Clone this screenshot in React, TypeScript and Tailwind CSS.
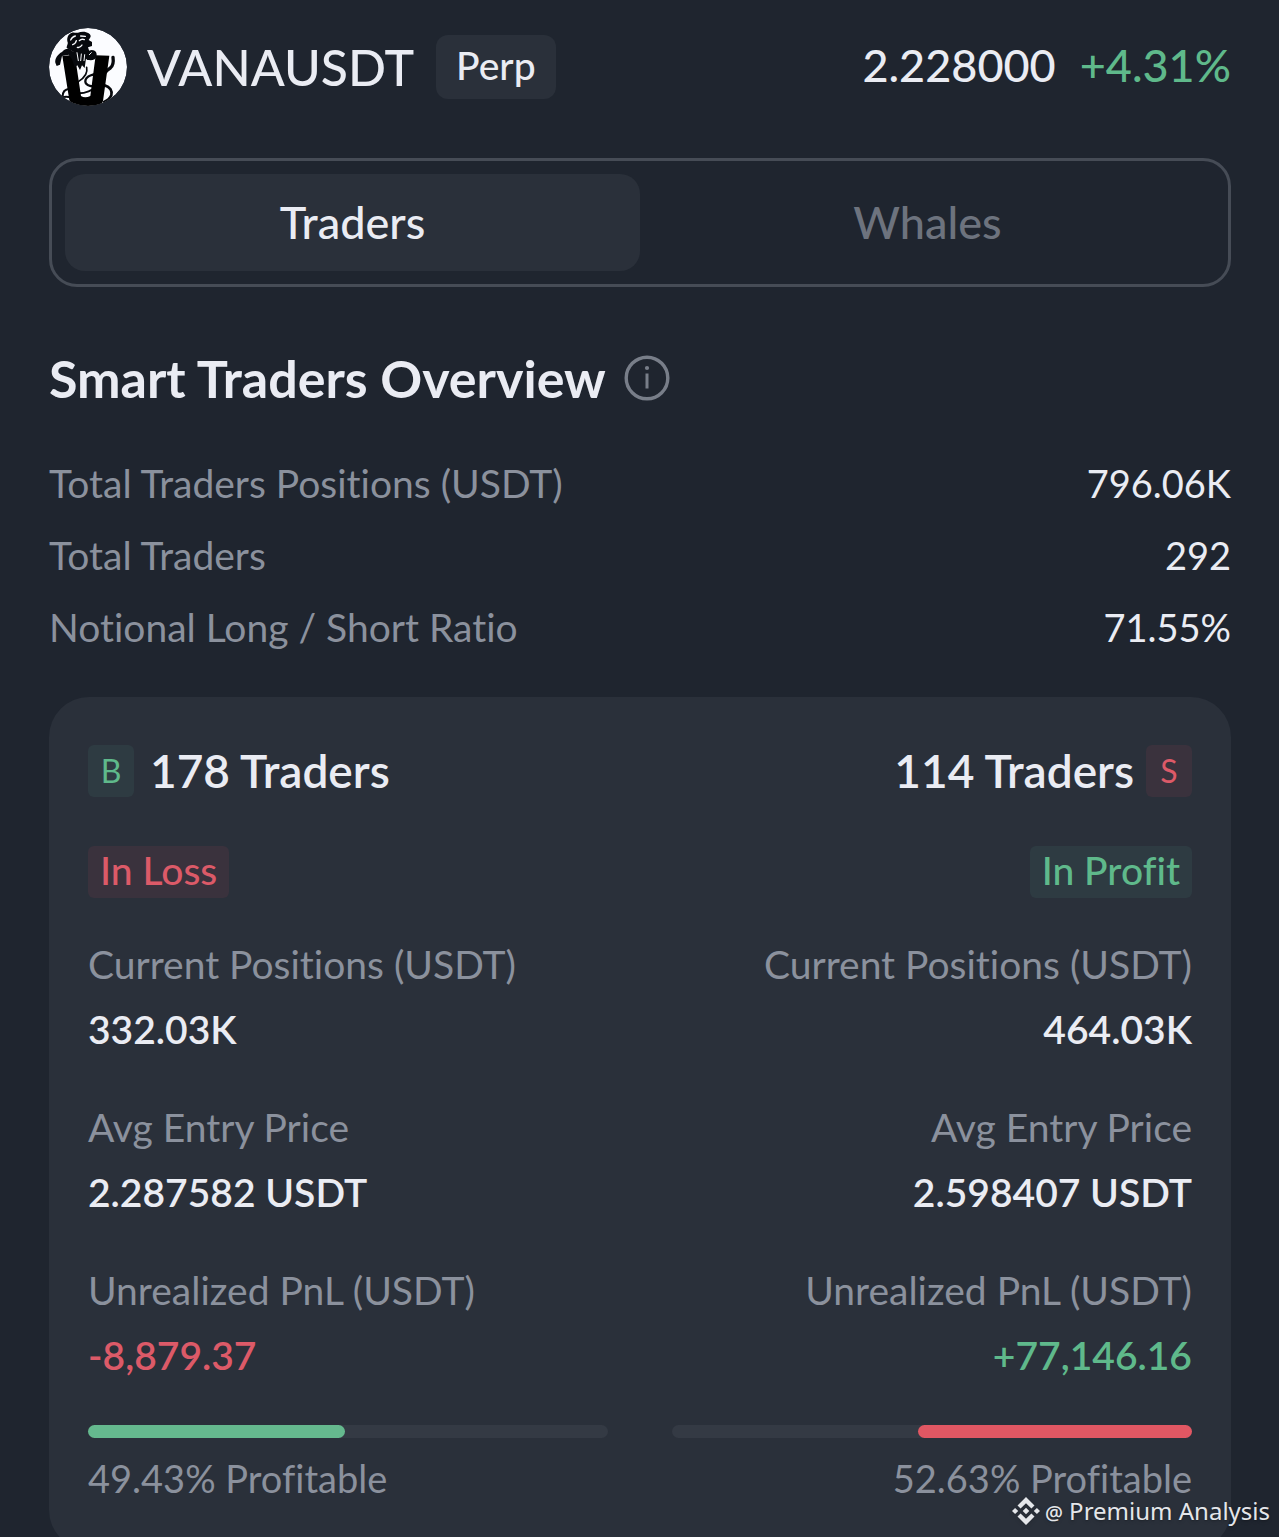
type Tone = 'green' | 'red';

type Side = {
  letter: string;
  tone: Tone;
  traders: string;
  status: string;
  statusTone: Tone;
  positions: string;
  entry: string;
  pnl: string;
  pnlTone: Tone;
  profitable: number;
};

const tag: Record<Tone, string> = {
  green: 'bg-[#2e3b42] text-[#5fb98b]',
  red: 'bg-[#3a323d] text-[#dc5a68]',
};
const ink: Record<Tone, string> = { green: 'text-[#5fb98b]', red: 'text-[#dc5a68]' };
const fill: Record<Tone, string> = { green: 'bg-[#65b98e]', red: 'bg-[#e15763]' };

const overview = [
  ['Total Traders Positions (USDT)', '796.06K'],
  ['Total Traders', '292'],
  ['Notional Long / Short Ratio', '71.55%'],
];

const longs: Side = {
  letter: 'B',
  tone: 'green',
  traders: '178 Traders',
  status: 'In Loss',
  statusTone: 'red',
  positions: '332.03K',
  entry: '2.287582 USDT',
  pnl: '-8,879.37',
  pnlTone: 'red',
  profitable: 49.43,
};

const shorts: Side = {
  letter: 'S',
  tone: 'red',
  traders: '114 Traders',
  status: 'In Profit',
  statusTone: 'green',
  positions: '464.03K',
  entry: '2.598407 USDT',
  pnl: '+77,146.16',
  pnlTone: 'green',
  profitable: 52.63,
};

function CoinLogo() {
  return (
    <svg viewBox="27 24 234 234" className="size-[78px] shrink-0" role="img" aria-label="VANA">
      <clipPath id="coin">
        <circle cx="144" cy="141" r="117" />
      </clipPath>
      <g clipPath="url(#coin)">
        <circle cx="144" cy="141" r="117" fill="#fbfcff" />
        <g fill="none" stroke="#07090d" strokeLinecap="round" strokeLinejoin="round">
          <path d="M140 142c4 18-8 32-24 42" strokeWidth="5" />
          <path d="M188 164c-24-6-52 4-52 20 0 14 20 18 52 14" strokeWidth="7" />
          <path d="M194 196c16 4 24 18 20 30-4 10-12 16-22 20" strokeWidth="8" />
          <path d="M118 220c16 0 40-8 54-22" strokeWidth="6" />
          <path d="M88 206c-14 2-20 12-20 22M92 232c-10-2-18-2-24 0" strokeWidth="6" />
          <path d="M219 112c2 14 0 26-8 32-6 4-10 6-14 12" strokeWidth="10" />
        </g>
        <path d="M67 108l22-2 16 3 18 119q12 8 28 0l16-122 41 1-19 136q-3 12-14 18H100q-10-8-12-20z" fill="#000" />
        <path
          d="M46 128c-2-12 8-26 20-32 8-8 16-12 24-8l8 6 14-2 10-4 12 4 14 0c6-4 16-2 20 4 4 8 2 18-4 22-8 4-16 2-22 2l-4-4-4 28-8-8-6 14-8-14-8 6-8-24-10-14-20 4-6 26-10 4z"
          fill="#07090d"
        />
        <path
          d="M80 84c0-8 6-12 2-20-2-14 4-22 14-26 6-2 12 2 18 0 10-4 24-4 32 2 6 4 8 10 4 14l-4 6 10 6 0 12-12 4 4 12-10 6-26-2-14-4z"
          fill="#07090d"
        />
        <g fill="none" stroke="#fbfcff" strokeLinecap="round">
          <path d="M92 60c3-7 8-11 14-12M98 74c6-2 10-7 11-12M122 48l14 1M118 62c4-4 10-5 15-3M112 82c7 2 11-2 14-7" strokeWidth="4" />
          <path d="M111 98l4 24M124 102l-2 20M134 104l-2 18M148 104l6-6" strokeWidth="3" />
        </g>
      </g>
    </svg>
  );
}

function InfoIcon() {
  return (
    <svg viewBox="0 0 46 46" className="size-[46px]" fill="none" stroke="#787e89" aria-hidden="true">
      <circle cx="23" cy="23" r="20.8" strokeWidth="3.4" />
      <path d="M23 18.500v15" strokeWidth="3" />
      <circle cx="23" cy="13" r="2.100" fill="#787e89" stroke="none" />
    </svg>
  );
}

function BinanceMark() {
  return (
    <svg viewBox="0 0 28 28" className="size-7 drop-shadow-sm" fill="#e4e6ea" aria-hidden="true">
      <path d="M14 0l8.500 8.500-3.100 3.100L14 6.200l-5.400 5.400-3.100-3.100zM14 28l-8.500-8.500 3.100-3.100 5.400 5.400 5.400-5.400 3.100 3.100zM0 14l3.100-3.100L6.200 14l-3.100 3.100zM21.800 14l3.100-3.100L28 14l-3.100 3.100zM14 10.700l3.300 3.300-3.300 3.300-3.300-3.300z" />
    </svg>
  );
}

function Stat({ label, value, tone }: { label: string; value: string; tone?: Tone }) {
  return (
    <div>
      <dt className="text-[#8b919d]">{label}</dt>
      <dd className={`font-semibold ${tone ? ink[tone] : 'text-[#eaecf3]'}`}>{value}</dd>
    </div>
  );
}

function SidePanel({ side, right = false }: { side: Side; right?: boolean }) {
  return (
    <section className={`flex flex-col ${right ? 'items-end text-right' : 'items-start'}`}>
      <div className={`flex items-center ${right ? 'flex-row-reverse gap-3' : 'gap-4'}`}>
        <span className={`flex h-[52px] w-[46px] items-center justify-center rounded-md text-[32px] leading-none ${tag[side.tone]}`}>
          {side.letter}
        </span>
        <h2 className="text-[46px] leading-[52px] font-semibold">{side.traders}</h2>
      </div>
      <span className={`mt-[49px] rounded-md px-3 pb-1 text-[39px] leading-[48px] font-medium ${tag[side.statusTone]}`}>
        {side.status}
      </span>
      <dl className="mt-[34px] flex flex-col gap-[33px] text-[39px] leading-[65px]">
        <Stat label="Current Positions (USDT)" value={side.positions} />
        <Stat label="Avg Entry Price" value={side.entry} />
        <Stat label="Unrealized PnL (USDT)" value={side.pnl} tone={side.pnlTone} />
      </dl>
      <div className={`mt-[37px] flex h-[13px] w-full rounded-full bg-[#343a44] ${right ? 'justify-end' : ''}`}>
        <div className={`rounded-full ${fill[side.tone]}`} style={{ width: `${side.profitable}%` }} />
      </div>
      <p className="mt-4 text-[38px] leading-[48px] text-[#8b919d]">{side.profitable}% Profitable</p>
    </section>
  );
}

export default function App() {
  return (
    <main className='relative h-screen overflow-hidden bg-[#1f252f] px-12 pt-7 font-["Lato",sans-serif] text-[#eaecf3] [font-variant-ligatures:none]'>
      <div className="pl-px">
        <header className="flex h-[78px] items-center">
          <CoinLogo />
          <h1 className="ml-5 text-[50px] leading-[78px] font-medium">VANAUSDT</h1>
          <span className="ml-[22px] rounded-xl bg-[#2a303a] px-5 pb-1 text-[39px] leading-[60px] font-medium">Perp</span>
          <div className="ml-auto flex gap-6 pb-1 text-[45px] leading-none font-medium">
            <span>2.228000</span>
            <span className="text-[#5fb98b]">+4.31%</span>
          </div>
        </header>

        <div role="tablist" className="mt-[52px] grid grid-cols-2 rounded-[28px] border-[3px] border-[#464c56] p-[13px] text-[45px] leading-[97px] font-medium">
          <button type="button" role="tab" aria-selected="true" className="rounded-[20px] bg-[#2a303a]">
            Traders
          </button>
          <button type="button" role="tab" aria-selected="false" className="text-[#6d737e]">
            Whales
          </button>
        </div>

        <div className="mt-[59px] flex items-center gap-[18px]">
          <h2 className="text-[52px] leading-[64px] font-bold">Smart Traders Overview</h2>
          <button type="button" aria-label="About smart traders overview">
            <InfoIcon />
          </button>
        </div>

        <dl className="mt-[37px] text-[38px] leading-[72px]">
          {overview.map(([label, value]) => (
            <div key={label} className="flex justify-between">
              <dt className="text-[39px] text-[#8b919d]">{label}</dt>
              <dd>{value}</dd>
            </div>
          ))}
        </dl>

        <div className="mt-[34px] grid grid-cols-2 gap-16 rounded-[40px] bg-[#2a303a] px-[39px] pt-12 pb-12">
          <SidePanel side={longs} />
          <SidePanel side={shorts} right />
        </div>
      </div>

      <div className='absolute right-[9px] bottom-[10px] flex items-center gap-[5px] font-["Noto_Sans",sans-serif] text-2xl text-[#e4e6ea] text-shadow-md'>
        <BinanceMark />
        <span>
          <span className="text-xl font-medium">@</span> Premium Analysis
        </span>
      </div>
    </main>
  );
}
